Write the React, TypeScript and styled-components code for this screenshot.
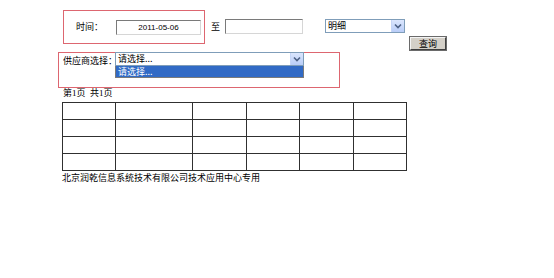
import React from 'react';
import styled, { createGlobalStyle } from 'styled-components';

const GlobalStyle = createGlobalStyle`
  html, body {
    margin: 0;
    padding: 0;
    background: #ffffff;
  }
  body {
    font-family: "Noto Sans CJK SC", "Liberation Sans", sans-serif;
    font-size: 9px;
    color: #000;
  }
`;

const Page = styled.div`
  width: 554px;
  height: 278px;
  padding-top: 10px;
  box-sizing: border-box;
`;

const TopRow = styled.div`
  display: flex;
  align-items: flex-start;
  padding-left: 63px;
`;

const RedBox = styled.div<{ $width: number; $height: number }>`
  box-sizing: border-box;
  width: ${(p) => p.$width}px;
  height: ${(p) => p.$height}px;
  border: 1px solid #dd6670;
  display: flex;
  position: relative;
`;

const DateBox = styled(RedBox)`
  align-items: center;
  padding-left: 12px;
`;

const Label = styled.span`
  line-height: 14px;
  white-space: nowrap;
`;

const DateLabel = styled(Label)`
  width: 40px;
`;

const TextInput = styled.div<{ $width: number }>`
  box-sizing: border-box;
  width: ${(p) => p.$width}px;
  height: 15px;
  border-style: solid;
  border-width: 1px;
  border-color: #7a7a7a #d6d6d6 #d6d6d6 #7a7a7a;
  background: #fff;
  font-family: "Liberation Sans", sans-serif;
  font-size: 8px;
  line-height: 13px;
  text-align: center;
  margin-top: 1px;
`;

const To = styled(Label)`
  margin: 10px 5px 0 6px;
`;

const ToInput = styled(TextInput)`
  margin-top: 9px;
`;

const RightColumn = styled.div`
  display: flex;
  flex-direction: column;
  margin-left: 22px;
  width: 121px;
`;

const SelectBox = styled.div<{ $width: number }>`
  box-sizing: border-box;
  width: ${(p) => p.$width}px;
  height: 14px;
  border: 1px solid #7f9db9;
  background: #fff;
  display: flex;
  align-items: center;
  padding-left: 2px;
  line-height: 12px;
`;

const ModeSelect = styled(SelectBox)`
  margin-top: 9px;
`;

const SelectText = styled.span`
  flex: 1;
  white-space: nowrap;
`;

const ArrowButton = styled.div`
  width: 12px;
  height: 12px;
  background: linear-gradient(#dbe6fd, #b9cdf8);
  border-left: 1px solid #c6d6f7;
  display: flex;
  align-items: center;
  justify-content: center;
`;

const QueryButton = styled.div`
  align-self: flex-end;
  box-sizing: border-box;
  width: 36px;
  height: 13px;
  margin: 4px 0 1px 0;
  border-style: solid;
  border-width: 1px;
  border-color: #f4f4f4 #404040 #404040 #f4f4f4;
  outline: 1px solid #6a6a6a;
  background: #d4d0c8;
  text-align: center;
  line-height: 11px;
`;

const SupplierBox = styled(RedBox)`
  margin: 1px 0 0 58px;
  align-items: flex-start;
  padding-left: 4px;
`;

const SupplierLabel = styled(Label)`
  width: 52px;
  margin-top: 1px;
`;

const SupplierSelect = styled.div`
  position: relative;
  margin-top: -1px;
`;

const DropList = styled.div`
  position: absolute;
  left: 0;
  top: 14px;
  box-sizing: border-box;
  width: 189px;
  border: 1px solid #7a7a7a;
  border-top: none;
  background: #fff;
`;

const DropItem = styled.div`
  background: #316ac5;
  color: #fff;
  line-height: 11px;
  padding-left: 2px;
`;

const PageInfo = styled.div`
  padding-left: 63px;
  line-height: 11px;
  font-family: "Liberation Serif", "Noto Sans CJK SC", serif;
`;

const Grid = styled.table`
  margin: 3px 0 0 62px;
  border-collapse: collapse;
  table-layout: fixed;
`;

const Cell = styled.td<{ $width: number }>`
  width: ${(p) => p.$width - 1}px;
  height: 16px;
  border: 1px solid #303030;
  padding: 0;
`;

const Footer = styled.div`
  padding-left: 62px;
  margin-top: 1px;
  line-height: 12px;
`;

const Chevron = () => (
  <svg width="8" height="6" viewBox="0 0 8 6">
    <path d="M1 1.5 L4 4.5 L7 1.5" fill="none" stroke="#4d6185" strokeWidth="1.6" />
  </svg>
);

const columns = [53, 77, 54, 53, 54, 53];
const rows = [0, 1, 2, 3];

const App: React.FC = () => {
  return (
    <Page>
      <GlobalStyle />
      <TopRow>
        <DateBox $width={142} $height={34}>
          <DateLabel>时间：</DateLabel>
          <TextInput $width={85}>2011-05-06</TextInput>
        </DateBox>
        <To>至</To>
        <ToInput $width={78} />
        <RightColumn>
          <ModeSelect $width={80}>
            <SelectText>明细</SelectText>
            <ArrowButton>
              <Chevron />
            </ArrowButton>
          </ModeSelect>
          <QueryButton>查询</QueryButton>
        </RightColumn>
      </TopRow>
      <SupplierBox $width={282} $height={36}>
        <SupplierLabel>供应商选择：</SupplierLabel>
        <SupplierSelect>
          <SelectBox $width={189}>
            <SelectText>请选择...</SelectText>
            <ArrowButton>
              <Chevron />
            </ArrowButton>
          </SelectBox>
          <DropList>
            <DropItem>请选择...</DropItem>
          </DropList>
        </SupplierSelect>
      </SupplierBox>
      <PageInfo>第1页&nbsp;&nbsp;共1页</PageInfo>
      <Grid>
        <tbody>
          {rows.map((r) => (
            <tr key={r}>
              {columns.map((w, i) => (
                <Cell key={i} $width={w} />
              ))}
            </tr>
          ))}
        </tbody>
      </Grid>
      <Footer>北京润乾信息系统技术有限公司技术应用中心专用</Footer>
    </Page>
  );
};

export default App;
